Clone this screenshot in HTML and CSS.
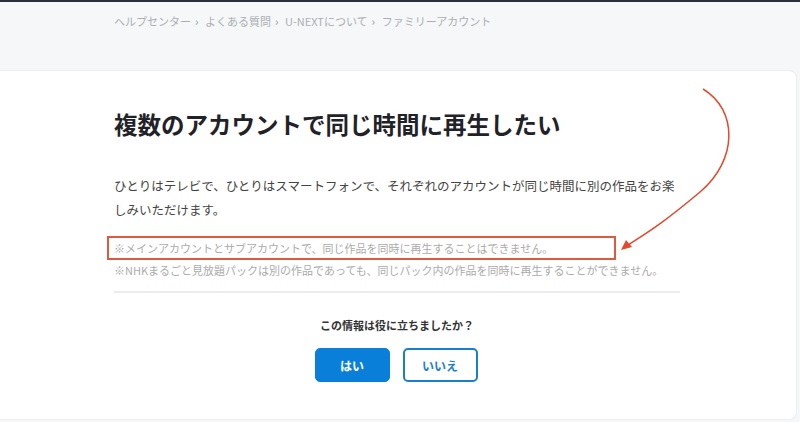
FILE: index.html
```html
<!DOCTYPE html>
<html lang="ja">
<head>
    <meta charset="UTF-8">
    <meta name="viewport" content="width=device-width, initial-scale=1.0">
    <title>複数のアカウントで同じ時間に再生したい | ヘルプセンター</title>
    <link rel="stylesheet" href="styles.css">
</head>
<body>
    <div class="topbar"></div>

    <!-- Breadcrumb -->
    <nav class="breadcrumb">
        <a href="#">ヘルプセンター</a><span class="sep">›</span>
        <a href="#">よくある質問</a><span class="sep">›</span>
        <a href="#">U-NEXTについて</a><span class="sep">›</span>
        <a href="#">ファミリーアカウント</a>
    </nav>

    <!-- Article card -->
    <main class="card">
        <div class="article">
            <h1 class="article-title">複数のアカウントで同じ時間に再生したい</h1>
            <p class="article-body">ひとりはテレビで、ひとりはスマートフォンで、それぞれのアカウントが同じ時間に別の作品をお楽しみいただけます。</p>

            <div class="notes">
                <p class="note note-marked">※メインアカウントとサブアカウントで、同じ作品を同時に再生することはできません。</p>
                <p class="note">※NHKまるごと見放題パックは別の作品であっても、同じパック内の作品を同時に再生することができません。</p>
            </div>

            <hr class="divider">

            <div class="feedback">
                <p class="feedback-question">この情報は役に立ちましたか？</p>
                <div class="feedback-buttons">
                    <button type="button" class="btn btn-yes">はい</button>
                    <button type="button" class="btn btn-no">いいえ</button>
                </div>
            </div>
        </div>
    </main>

    <!-- Annotation arrow pointing at the marked note -->
    <svg class="annotation" width="800" height="422" viewBox="0 0 800 422">
        <path d="M703 89 C 738 110, 738 160, 700 192 S 648 232, 628 245" fill="none" stroke="#e2492d" stroke-width="1.5"/>
        <path d="M621 250 L 626 240 L 632 247 Z" fill="#e2492d"/>
    </svg>
</body>
</html>
```

FILE: styles.css
```css
/* Page base */
body {
    margin: 0;
    background-color: #f5f7f9;
    font-family: "Noto Sans CJK JP", "Noto Sans", sans-serif;
    color: #333;
    position: relative;
    height: 422px;
    overflow: hidden;
}

p {
    margin: 0;
}

.topbar {
    height: 2px;
    background-color: #2c2f3c;
}

/* Breadcrumb */
.breadcrumb {
    padding: 10px 0 0 114px;
    height: 24px;
    line-height: 18px;
    font-size: 11px;
    color: #acafb2;
}

.breadcrumb a {
    color: #acafb2;
    text-decoration: none;
}

.breadcrumb .sep {
    margin: 0 4px;
    font-weight: bold;
}

/* Card */
.card {
    margin: 34px 3px 0 0;
    height: 348px;
    background-color: #ffffff;
    border: 1px solid #eceef1;
    border-left: none;
    border-radius: 0 8px 8px 0;
}

.article {
    width: 566px;
    margin-left: 114px;
    padding-top: 38px;
}

.article-title {
    margin: 0;
    font-size: 23.5px;
    line-height: 30px;
    font-weight: bold;
    color: #1f2328;
}

.article-body {
    margin-top: 35px;
    font-size: 12.5px;
    line-height: 24px;
    color: #444;
}

/* Notes */
.notes {
    margin-top: 14px;
}

.note {
    font-size: 11px;
    line-height: 20px;
    color: #ababab;
}

.note-marked {
    box-sizing: border-box;
    width: 509px;
    height: 24px;
    margin-left: -7px;
    padding-left: 5px;
    border: 2px solid #dc5a3e;
}

.divider {
    margin: 11px 0 0;
    border: none;
    border-top: 2px solid #ececec;
}

/* Feedback */
.feedback {
    margin-top: 22px;
    text-align: center;
}

.feedback-question {
    font-size: 11px;
    line-height: 20px;
    font-weight: bold;
    color: #333;
}

.feedback-buttons {
    display: flex;
    justify-content: center;
    gap: 13px;
    margin-top: 13px;
    padding-right: 2px;
}

.btn {
    width: 75px;
    height: 34px;
    border-radius: 5px;
    font-family: inherit;
    font-size: 12px;
    font-weight: bold;
    cursor: pointer;
}

.btn-yes {
    background-color: #0a7fda;
    border: 1px solid #0a7fda;
    color: #ffffff;
}

.btn-no {
    background-color: #ffffff;
    border: 2px solid #1a7fc9;
    color: #1a7fc9;
}

/* Annotation overlay */
.annotation {
    position: absolute;
    top: 0;
    left: 0;
    pointer-events: none;
}
```
